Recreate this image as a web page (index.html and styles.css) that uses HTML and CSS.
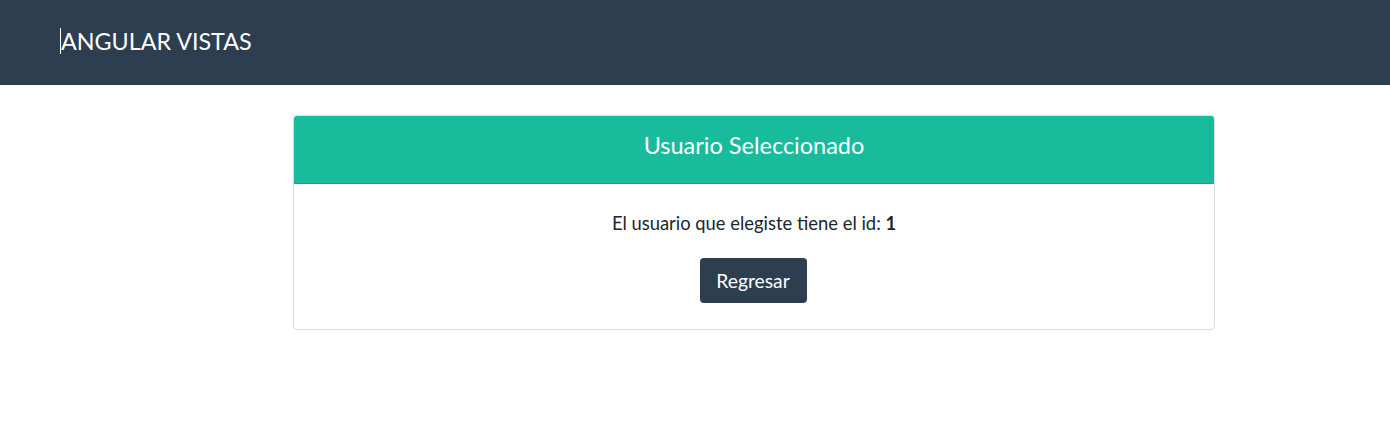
FILE: index.html
```html
<!DOCTYPE html>
<html lang="es">
<head>
<meta charset="utf-8">
<title>Angular Vistas</title>
<link rel="stylesheet" href="styles.css">
</head>
<body>
<nav class="navbar">
  <span class="cursor"></span><a class="brand" href="#">ANGULAR VISTAS</a>
</nav>
<main class="content">
  <section class="card">
    <header class="card-header">Usuario Seleccionado</header>
    <div class="card-body">
      <p class="info">El usuario que elegiste tiene el id: <strong>1</strong></p>
      <button class="btn" type="button">Regresar</button>
    </div>
  </section>
</main>
</body>
</html>
```

FILE: styles.css
```css
* { box-sizing: border-box; }
body {
  margin: 0;
  font-family: Lato, "Open Sans", sans-serif;
  color: #212529;
  background: #fff;
}
.navbar {
  height: 85px;
  background: #2c3e50;
  display: flex;
  align-items: center;
  padding-left: 60px;
}
.cursor {
  width: 1px;
  height: 26px;
  background: #fff;
  margin-top: -4px;
}
.brand {
  color: #fff;
  text-decoration: none;
  font-size: 23.3px;
  margin-top: -4px;
}
.content {
  padding-top: 30px;
  padding-left: 293px;
}
.card {
  width: 922px;
  border: 1px solid #dcdcdc;
  border-radius: 4px;
  overflow: hidden;
}
.card-header {
  height: 68px;
  background: #18bc9c;
  border-bottom: 1px solid #15a589;
  color: #fff;
  font-size: 23.5px;
  display: flex;
  align-items: center;
  justify-content: center;
  padding-bottom: 10px;
}
.card-body {
  display: flex;
  flex-direction: column;
  align-items: center;
  padding: 28px 0 26px 0;
}
.info {
  margin: 0 0 24px;
  font-size: 18.4px;
  line-height: 22px;
}
.info strong { font-weight: 700; }
.btn {
  font-family: inherit;
  font-size: 19.3px;
  color: #fff;
  background: #2c3e50;
  border: 0;
  border-radius: 4px;
  width: 107px;
  height: 45px;
  padding: 0;
  margin-right: 2px;
}
```
